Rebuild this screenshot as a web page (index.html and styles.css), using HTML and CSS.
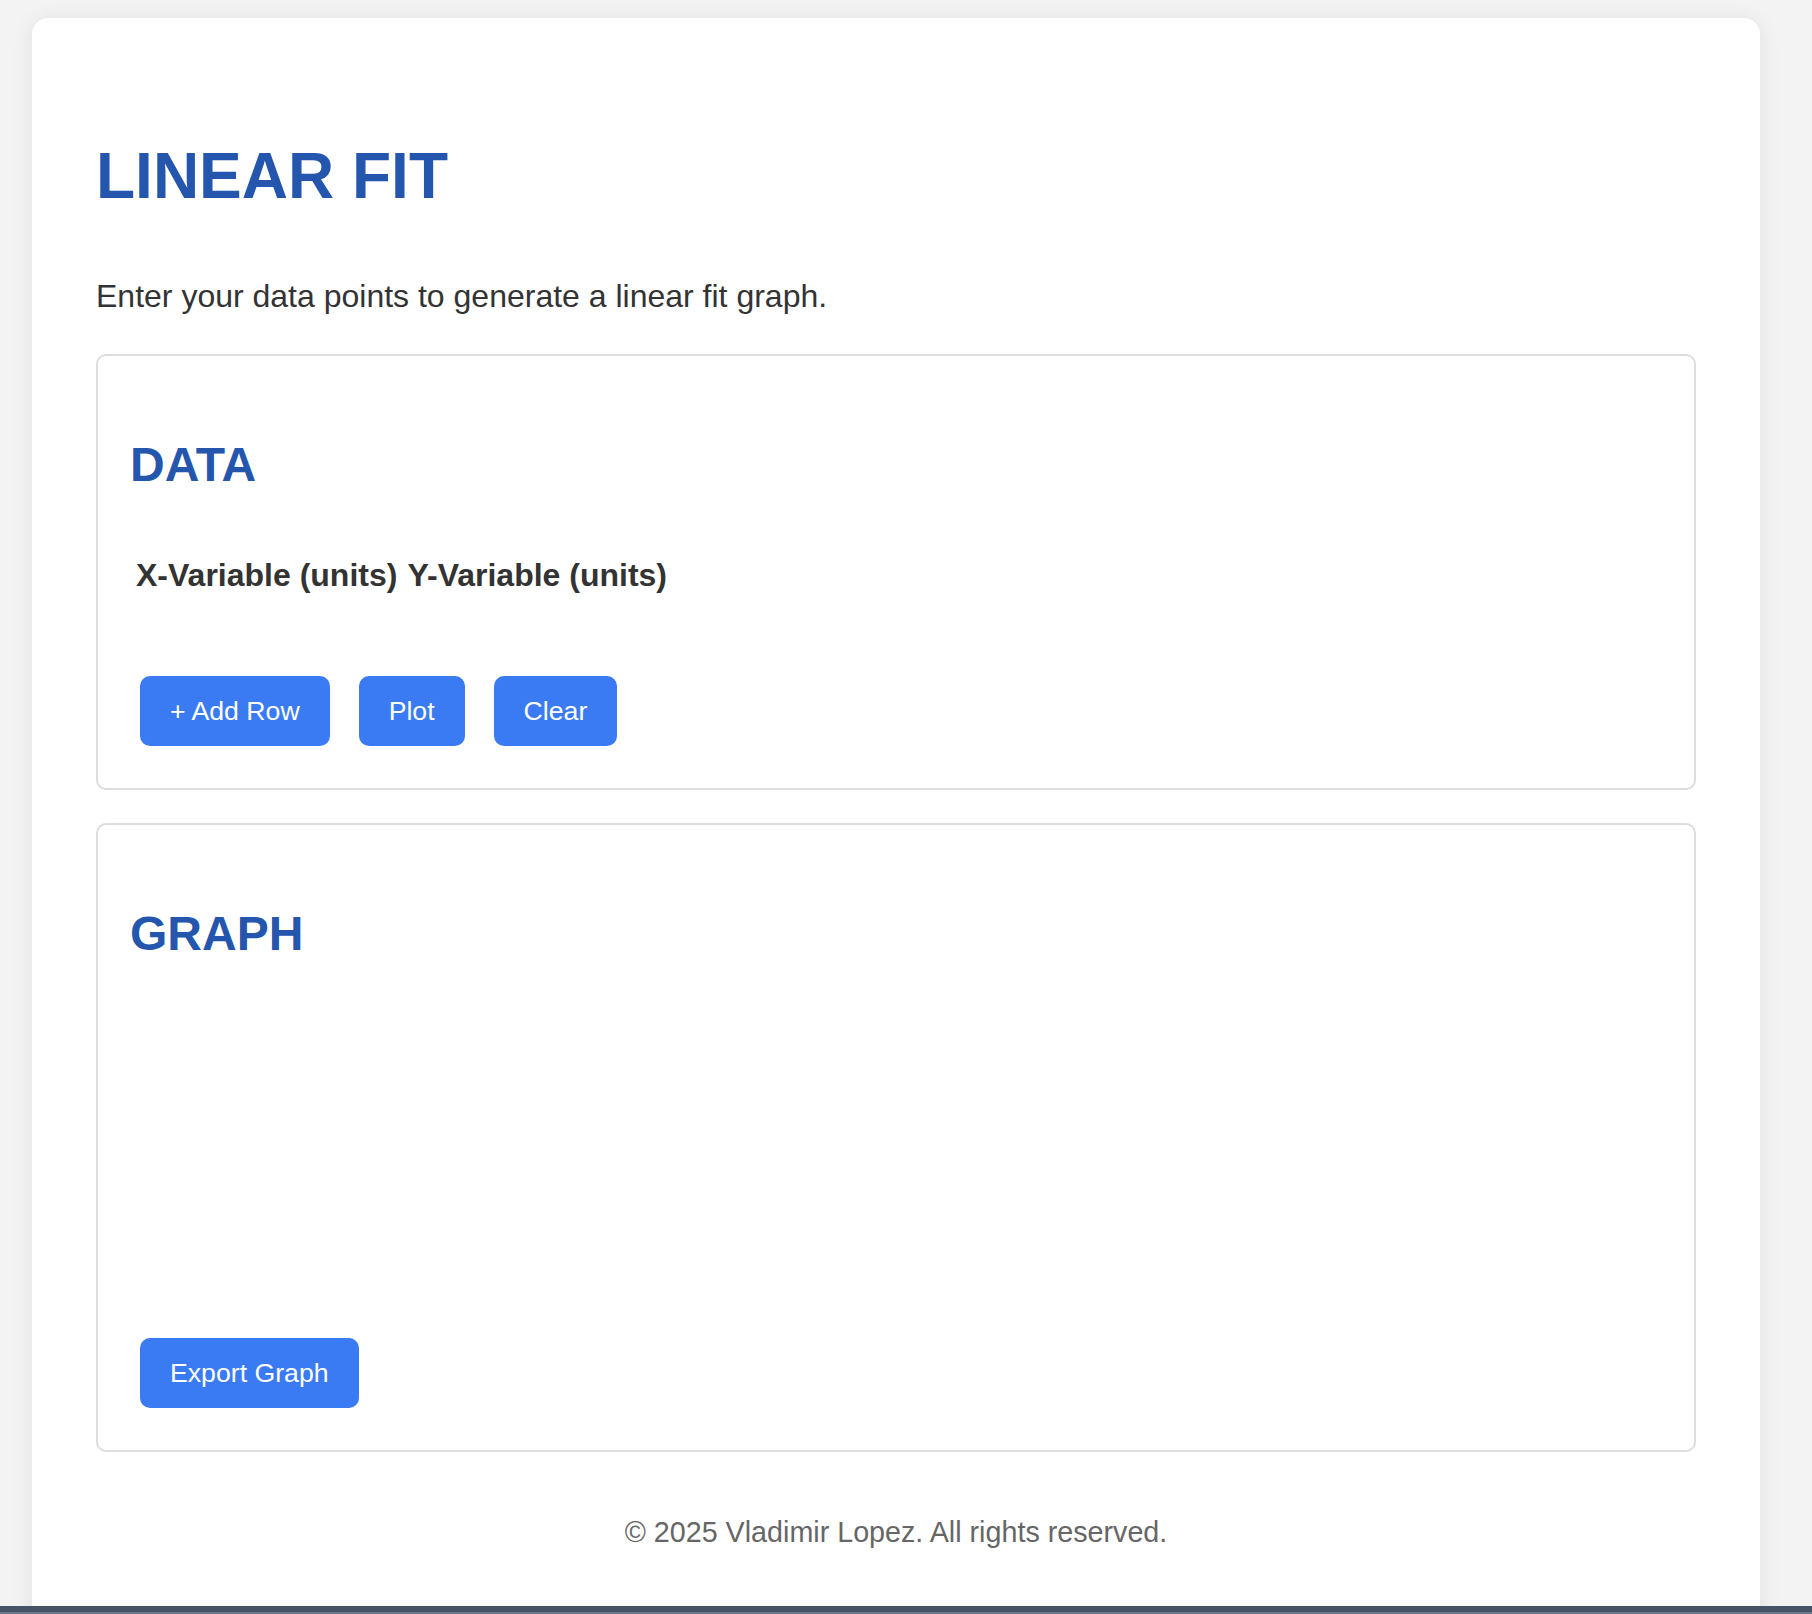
FILE: index.html
```html
<!DOCTYPE html>
<html lang="en">
<head>
<meta charset="utf-8">
<title>Linear Fit</title>
<link rel="stylesheet" href="styles.css">
</head>
<body>
<main class="card">
  <h1 class="title">LINEAR FIT</h1>
  <p class="intro">Enter your data points to generate a linear fit graph.</p>

  <section class="panel">
    <h2 class="panel-title">DATA</h2>
    <div class="cols">
      <span class="col-head">X-Variable (units)</span>
      <span class="col-head">Y-Variable (units)</span>
    </div>
    <div class="actions">
      <button class="btn">+ Add Row</button>
      <button class="btn">Plot</button>
      <button class="btn">Clear</button>
    </div>
  </section>

  <section class="panel">
    <h2 class="panel-title">GRAPH</h2>
    <div class="plot"></div>
    <div class="actions">
      <button class="btn">Export Graph</button>
    </div>
  </section>

  <footer class="copy">© 2025 Vladimir Lopez. All rights reserved.</footer>
</main>
<div class="bottom-bar"></div>
</body>
</html>
```

FILE: styles.css
```css
html, body {
  margin: 0;
  padding: 0;
  overflow: hidden;
}

body {
  background: #f3f3f3;
  font-family: "Liberation Sans", Arial, Helvetica, sans-serif;
  color: #333333;
}

.card {
  box-sizing: border-box;
  width: 1728px;
  margin: 18px 0 0 32px;
  padding: 64px 64px 120px;
  background: #ffffff;
  border-radius: 16px;
  box-shadow: 0 2px 22px rgba(0, 0, 0, 0.08);
}

.title {
  margin: 57px 0 0;
  font-size: 64px;
  line-height: 74px;
  font-weight: 700;
  color: #2456ad;
}

.intro {
  margin: 65px 0 0;
  font-size: 32px;
  line-height: 37px;
  color: #333333;
}

.panel {
  margin-top: 39px;
  border: 2px solid #dddddd;
  border-radius: 10px;
  padding: 32px;
}

.panel + .panel {
  margin-top: 33px;
}

.panel-title {
  margin: 49px 0 0;
  font-size: 48px;
  line-height: 55px;
  font-weight: 700;
  color: #2456ad;
}

.cols {
  display: flex;
  gap: 10px;
  margin-top: 65px;
  padding-left: 6px;
}

.col-head {
  font-size: 32px;
  line-height: 37px;
  font-weight: 700;
  color: #333333;
}

.actions {
  display: flex;
  gap: 29px;
  margin: 82px 0 10px;
  padding-left: 10px;
}

.plot {
  height: 377px;
}

.plot + .actions {
  margin-top: 0;
}

.btn {
  font-family: "Liberation Sans", Arial, Helvetica, sans-serif;
  font-size: 26.67px;
  line-height: 30px;
  padding: 20px 30px;
  border: none;
  border-radius: 10px;
  background: #3a7bf4;
  color: #ffffff;
}

.copy {
  margin-top: 64px;
  text-align: center;
  font-size: 28.7px;
  line-height: 32px;
  color: #666666;
}

.bottom-bar {
  position: fixed;
  left: 0;
  right: 0;
  bottom: 0;
  height: 6px;
  background: #465367;
  border-bottom: 2px solid #6b778a;
}
```
